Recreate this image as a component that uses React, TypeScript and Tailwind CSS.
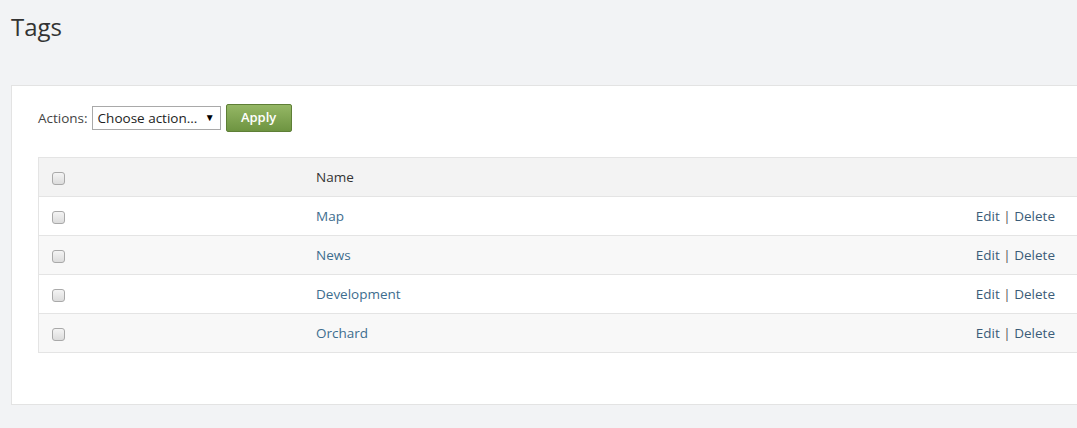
import React from "react";

const tags = ["Map", "News", "Development", "Orchard"];

const Check = () => (
  <span className="inline-block w-[13px] h-[13px] rounded-[3px] border border-[#a9a9a9] bg-gradient-to-b from-[#f4f4f4] to-[#dcdcdc] align-middle" />
);

const App = () => {
  return (
    <div
      className="w-[1077px] h-[428px] overflow-hidden bg-[#f2f3f5] text-[#333]"
      style={{ fontFamily: '"Open Sans", "Liberation Sans", sans-serif' }}
    >
      <h1 className="pl-[11px] pt-[12px] text-[24px] leading-[30px] text-[#333]">Tags</h1>

      <div className="ml-[11px] mt-[43px] w-[1090px] h-[320px] bg-white border border-[#e3e3e3] pl-[26px] pr-[26px] pt-[18px]">
        <div className="flex items-center gap-[4px] text-[13.5px]">
          <span className="text-[#444]">Actions:</span>
          <div className="relative flex items-center w-[129px] h-[24px] border border-[#a9a9a9] bg-white pl-[5px] text-[13.5px] text-[#222]">
            Choose action...
            <span className="absolute right-[5px] top-[3px] text-[10px] text-black">▼</span>
          </div>
          <button className="ml-[1px] w-[66px] h-[28px] border border-[#5e7f36] rounded-[2px] bg-gradient-to-b from-[#95b765] to-[#6e9441] text-white text-[13px] font-semibold">
            Apply
          </button>
        </div>

        <div className="mt-[25px] w-[1040px] border border-[#e4e4e4] text-[13.5px]">
          <div className="flex items-center h-[39px] bg-[#f3f3f3] border-b border-[#e4e4e4]">
            <div className="w-[277px] pl-[13px]">
              <Check />
            </div>
            <div className="flex-1 text-[#333]">Name</div>
          </div>
          {tags.map((tag, i) => (
            <div
              key={tag}
              className={`flex items-center ${i < tags.length - 1 ? "h-[39px] border-b border-[#e4e4e4]" : "h-[38px]"} ${i % 2 === 1 ? "bg-[#f8f8f8]" : "bg-white"}`}
            >
              <div className="w-[277px] pl-[13px]">
                <Check />
              </div>
              <div className="flex-1 text-[#3d6d8e]">{tag}</div>
              <div className="pr-[22px] text-[#3b5c78]">
                Edit <span className="text-[#555]">|</span> Delete
              </div>
            </div>
          ))}
        </div>
      </div>
    </div>
  );
};

export default App;
